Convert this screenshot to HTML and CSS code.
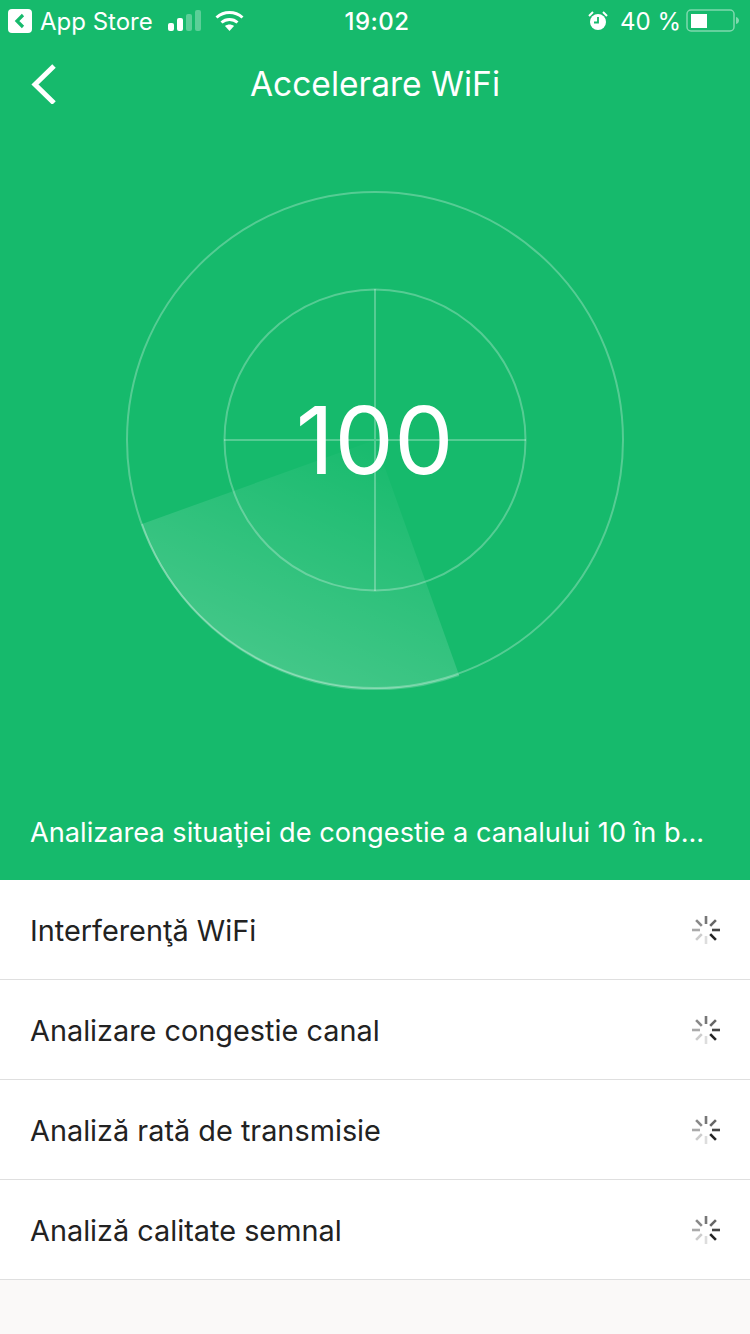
FILE: index.html
```html
<!DOCTYPE html>
<html>
<head>
  <title>Accelerare WiFi</title>
  <meta charset="utf-8" />
  <link rel="stylesheet" href="styles.css">
</head>
<body>
  <svg width="0" height="0" class="defs">
    <symbol id="spinner" viewBox="0 0 30 30">
      <g stroke-width="2.6">
        <path d="M15 1v8" stroke="#777" />
        <path d="M24.9 5.1l-5.7 5.7" stroke="#666" />
        <path d="M29 15h-8" stroke="#444" />
        <path d="M24.9 24.9l-5.7-5.7" stroke="#222" />
        <path d="M15 29v-8" stroke="#ddd" />
        <path d="M5.1 24.9l5.7-5.7" stroke="#ccc" />
        <path d="M1 15h8" stroke="#aaa" />
        <path d="M5.1 5.1l5.7 5.7" stroke="#888" />
      </g>
    </symbol>
  </svg>

  <div class="hero">
    <div class="status-bar">
      <div class="status-left">
        <span class="back-app">
          <svg width="24" height="24" viewBox="0 0 24 24">
            <rect width="24" height="24" rx="4" fill="#fff" />
            <path d="M15 6l-6 6 6 6" fill="none" stroke="#16ba6c" stroke-width="3.2" />
          </svg>
        </span>
        <span class="app-name">App Store</span>
        <svg class="signal" width="34" height="21" viewBox="0 0 34 21">
          <rect x="0" y="13" width="6" height="8" rx="2" fill="#fff" />
          <rect x="9" y="8" width="6" height="13" rx="2" fill="#fff" />
          <rect x="18" y="4" width="6" height="17" rx="2" fill="#fff" opacity=".3" />
          <rect x="27" y="0" width="6" height="21" rx="2" fill="#fff" opacity=".3" />
        </svg>
        <svg class="wifi" width="29" height="21" viewBox="0 0 29 21">
          <path d="M1.5 7.5C9 .8 20 .8 27.500 7.500" fill="none" stroke="#fff" stroke-width="3" />
          <path d="M6.500 12.500C11 8.500 18 8.500 22.500 12.500" fill="none" stroke="#fff" stroke-width="3" />
          <path d="M10 16c2.500-2 6.500-2 9 0l-4.500 5z" fill="#fff" />
        </svg>
      </div>
      <div class="status-time">19:02</div>
      <div class="status-right">
        <svg class="alarm" width="20" height="20" viewBox="0 0 20 20">
          <circle cx="10" cy="11" r="8" fill="#fff" />
          <path d="M10 6v5.500H6" fill="none" stroke="#16ba6c" stroke-width="1.800" />
          <path d="M1 5l4-4M19 5l-4-4" stroke="#fff" stroke-width="2" />
        </svg>
        <span class="battery-text">40 %</span>
        <svg class="battery" width="54" height="24" viewBox="0 0 54 24">
          <rect x="1" y="1" width="47" height="21" rx="4" fill="none" stroke="#fff" stroke-opacity=".45" stroke-width="1.500" />
          <rect x="5" y="5" width="16" height="14" fill="#fff" />
          <path d="M50 8c2 .5 3 2 3 3.500s-1 3-3 3.500z" fill="#fff" fill-opacity=".45" />
        </svg>
      </div>
    </div>

    <div class="nav-bar">
      <svg class="nav-back" width="26" height="40" viewBox="0 0 26 40">
        <path d="M23 2L4 20.500 23 39" fill="none" stroke="#fff" stroke-width="5" />
      </svg>
      <h1 class="nav-title">Accelerare WiFi</h1>
    </div>

    <div class="radar">
      <svg width="500" height="500" viewBox="0 0 500 500">
        <defs>
          <linearGradient id="sweep" gradientUnits="userSpaceOnUse" x1="280" y1="250" x2="170" y2="500">
            <stop offset="0" stop-color="#fff" stop-opacity="0" />
            <stop offset="1" stop-color="#fff" stop-opacity=".2" />
          </linearGradient>
        </defs>
        <path d="M250 250L17 334A248 248 0 0 0 334 485z" fill="url(#sweep)" />
        <g fill="none" stroke="#fff" stroke-opacity=".27" stroke-width="2">
          <circle cx="250" cy="250" r="248" />
          <circle cx="250" cy="250" r="150.500" />
          <path d="M99 250h302M250 99v302" />
        </g>
        <path d="M17 334A248 248 0 0 0 334 485" fill="none" stroke="#fff" stroke-opacity=".2" stroke-width="2" />
      </svg>
      <div class="score">100</div>
    </div>

    <p class="hero-status">Analizarea situaţiei de congestie a canalului 10 în b...</p>
  </div>

  <ul class="checks">
    <li class="check-row">
      <span class="check-name">Interferenţă WiFi</span>
      <svg class="spin" width="30" height="30"><use href="#spinner" /></svg>
    </li>
    <li class="check-row">
      <span class="check-name">Analizare congestie canal</span>
      <svg class="spin" width="30" height="30"><use href="#spinner" /></svg>
    </li>
    <li class="check-row">
      <span class="check-name">Analiză rată de transmisie</span>
      <svg class="spin" width="30" height="30"><use href="#spinner" /></svg>
    </li>
    <li class="check-row">
      <span class="check-name">Analiză calitate semnal</span>
      <svg class="spin" width="30" height="30"><use href="#spinner" /></svg>
    </li>
  </ul>
</body>
</html>
```

FILE: styles.css
```css
html, body {
  height: 100%;
}

body {
  margin: 0;
  padding: 0;
  background: #faf9f8;
  font-family: Inter, "Liberation Sans", sans-serif;
  overflow: hidden;
}

.defs {
  display: block;
  height: 0;
}

.hero {
  height: 880px;
  background: #16ba6c;
  color: #fff;
  display: flex;
  flex-direction: column;
}

.status-bar {
  height: 42px;
  padding: 0 4px 0 8px;
  display: grid;
  grid-template-columns: 1fr auto 1fr;
  align-items: center;
  font-size: 24px;
}

.status-left,
.status-right {
  display: flex;
  align-items: center;
}

.status-right {
  justify-content: flex-end;
}

.back-app {
  display: flex;
  margin-right: 8px;
}

.signal {
  margin-left: 15px;
  margin-bottom: 2px;
}

.wifi {
  margin-left: 13px;
  margin-bottom: 2px;
}

.status-time {
  font-weight: 500;
  letter-spacing: 0.5px;
}

.alarm {
  margin-right: 12px;
}

.battery-text {
  margin-right: 5px;
}

.battery {
  margin-right: 6px;
}

.nav-bar {
  height: 86px;
  display: flex;
  align-items: center;
  justify-content: center;
  position: relative;
}

.nav-back {
  position: absolute;
  left: 31px;
  top: 22px;
}

.nav-title {
  margin: 0 0 2px;
  font-size: 33.500px;
  font-weight: 400;
}

.radar {
  align-self: center;
  width: 500px;
  height: 500px;
  margin-top: 62px;
  position: relative;
}

.score {
  position: absolute;
  inset: 0;
  display: flex;
  align-items: center;
  justify-content: center;
  font-size: 94px;
  font-weight: 400;
  letter-spacing: 0.500px;
}

.hero-status {
  margin: 0;
  padding: 0 30px;
  margin-top: 123px;
  font-size: 27.200px;
  line-height: 40px;
  white-space: nowrap;
}

.checks {
  list-style: none;
  margin: 0;
  padding: 0;
}

.check-row {
  height: 99px;
  padding: 0 29px 0 30px;
  background: #fff;
  border-bottom: 1px solid #dfdfdf;
  display: flex;
  align-items: center;
  justify-content: space-between;
  font-size: 28.850px;
  color: #222;
}

.check-name {
  padding-top: 2px;
}
```
